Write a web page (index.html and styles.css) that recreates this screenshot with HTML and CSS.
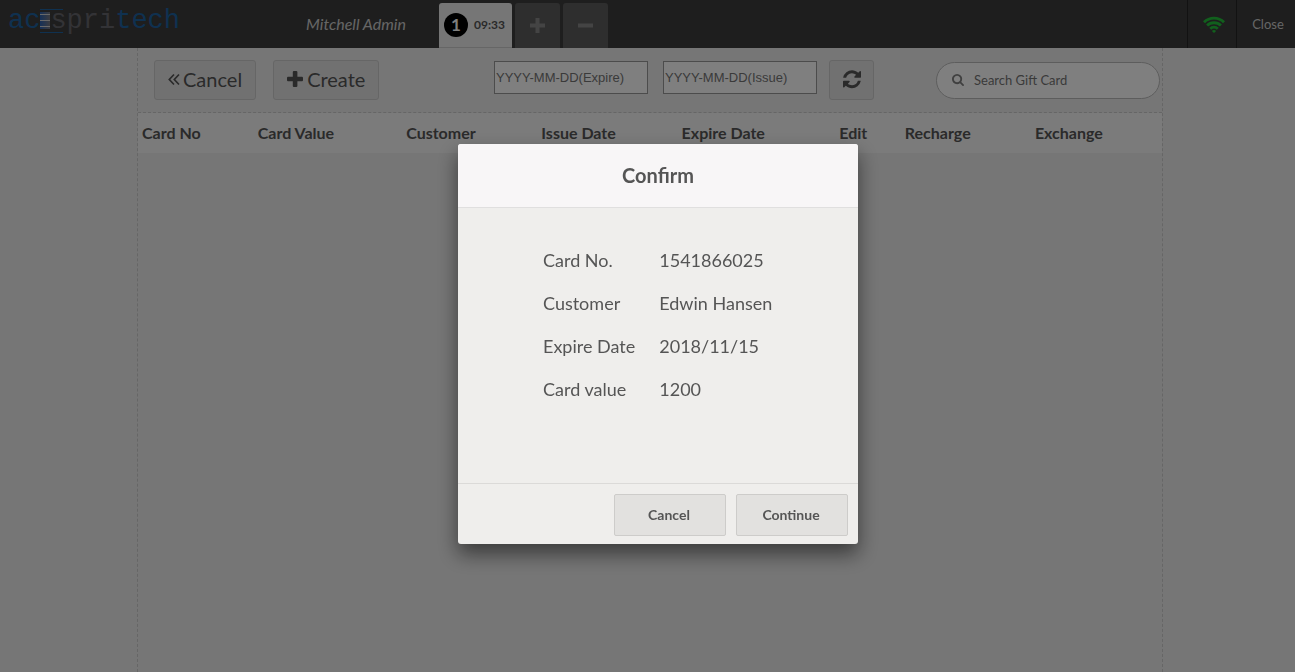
FILE: index.html
```html
<!DOCTYPE html>
<html lang="en">
<head>
<meta charset="utf-8">
<title>Gift Cards</title>
<link rel="stylesheet" href="styles.css">
</head>
<body>
<div class="pos">
  <header class="topbar">
    <div class="brand">
      <div class="logo">
        <span class="blue">ac</span>
        <svg class="logo-mark" viewBox="0 0 24 26" width="24" height="26" aria-hidden="true">
          <defs><linearGradient id="mark" x1="0" x2="1"><stop offset="0" stop-color="#2c62b0"/><stop offset="1" stop-color="#77777f"/></linearGradient></defs>
          <path d="M0 1.500H23M0 24.500H23" stroke="#1f62a0" fill="none"/>
          <rect y="4" width="10" height="17" fill="url(#mark)"/>
          <path d="M0 6.500H10M0 12.500H10M0 18.500H10" stroke="#d0d0d0"/>
        </svg>
        <span class="gray">spri</span><span class="blue">tech</span>
      </div>
      <span class="user">Mitchell Admin</span>
    </div>
    <nav class="orders">
      <button class="order active"><span class="num">1</span><span class="time">09:33</span></button>
      <button class="order" aria-label="New order"><svg width="15" height="15" viewBox="0 0 15 15"><path d="M7.500 2v11M2 7.500h11" stroke="#888" stroke-width="4" stroke-linecap="square" fill="none"/></svg></button>
      <button class="order" aria-label="Delete order"><svg width="15" height="15" viewBox="0 0 15 15"><path d="M2 7.500h11" stroke="#888" stroke-width="4" stroke-linecap="square" fill="none"/></svg></button>
    </nav>
    <div class="status">
      <div class="wifi"><svg width="22" height="17" viewBox="0 0 22 17" fill="none" stroke="#22c03a" stroke-width="3"><path d="M1 6.300A14.200 14.200 0 0 1 21 6.300M4.100 9.600A9.800 9.800 0 0 1 17.900 9.600M7.200 12.800A5.400 5.400 0 0 1 14.800 12.800" stroke-width="2.800"/><path d="M11 17L8.900 15A3 3 0 0 1 13.100 15Z" fill="#22c03a" stroke="none"/></svg></div>
      <button class="close">Close</button>
    </div>
  </header>
  <main class="screen">
    <div class="toolbar">
      <button class="btn"><svg width="12" height="14" viewBox="0 0 12 14" fill="none" stroke="currentColor" stroke-width="1.700"><path d="M6 2.500L1.300 7.500L6 12.500M11 2.500L6.300 7.500L11 12.500"/></svg>Cancel</button>
      <button class="btn create"><svg width="16" height="16" viewBox="0 0 16 16"><rect x="5.800" width="4.600" height="16" rx="1" fill="currentColor"/><rect y="5.700" width="16" height="4.600" rx="1" fill="currentColor"/></svg>Create</button>
      <div class="filters">
        <input class="date" type="text" aria-label="Expire date" placeholder="YYYY-MM-DD(Expire)">
        <input class="date" type="text" aria-label="Issue date" placeholder="YYYY-MM-DD(Issue)">
        <button class="btn refresh" aria-label="Refresh"><svg width="18" height="20" viewBox="0 0 1536 1664" fill="currentColor"><path d="M1511 928q0 5-1 7-64 268-268 434.500t-478 166.500q-146 0-282.500-55t-243.500-157l-129 129q-19 19-45 19t-45-19-19-45v-448q0-26 19-45t45-19h448q26 0 45 19t19 45-19 45l-137 137q71 66 161 102t187 36q134 0 250-65t186-179q11-17 53-117 8-23 30-23h192q13 0 22.500 9.500t9.500 22.500zm25-800v448q0 26-19 45t-45 19h-448q-26 0-45-19t-19-45 19-45l138-138q-148-137-349-137-134 0-250 65t-186 179q-11 17-53 117-8 23-30 23h-199q-13 0-22.500-9.500t-9.500-22.500v-7q65-268 270-434.500t480-166.500q146 0 284 55.500t245 156.500l130-129q19-19 45-19t45 19 19 45z"/></svg></button>
      </div>
      <label class="search">
        <svg width="12" height="12" viewBox="0 0 1664 1664" fill="currentColor" aria-hidden="true"><path d="M1152 704q0-185-131.500-316.500t-316.500-131.500-316.500 131.500-131.500 316.500 131.500 316.500 316.500 131.500 316.500-131.500 131.500-316.500zm512 832q0 52-38 90t-90 38q-54 0-90-38l-343-342q-179 124-399 124-143 0-273.500-55.500t-225-150-150-225-55.500-273.500 55.500-273.500 150-225 225-150 273.500-55.500 273.500 55.500 225 150 150 225 55.500 273.500q0 220-124 399l343 343q37 37 37 90z"/></svg>
        <input type="text" aria-label="Search Gift Card" placeholder="Search Gift Card">
      </label>
    </div>
    <table class="cards">
      <colgroup><col class="c-no"><col class="c-value"><col class="c-customer"><col class="c-issue"><col class="c-expire"><col class="c-edit"><col class="c-recharge"><col></colgroup>
      <thead><tr><th>Card No</th><th>Card Value</th><th>Customer</th><th>Issue Date</th><th>Expire Date</th><th>Edit</th><th>Recharge</th><th>Exchange</th></tr></thead>
    </table>
  </main>
</div>
<div class="overlay">
  <section class="dialog" role="dialog" aria-labelledby="dialog-title">
    <h1 class="title" id="dialog-title">Confirm</h1>
    <div class="body">
      <table class="details">
        <tr><td>Card No.</td><td>1541866025</td></tr>
        <tr><td>Customer</td><td>Edwin Hansen</td></tr>
        <tr><td>Expire Date</td><td>2018/11/15</td></tr>
        <tr><td>Card value</td><td>1200</td></tr>
      </table>
    </div>
    <footer class="actions"><button>Cancel</button><button>Continue</button></footer>
  </section>
</div>
</body>
</html>
```
FILE: styles.css
```css
* { box-sizing: border-box; }
body {
  margin: 0;
  font-family: Lato, "Liberation Sans", sans-serif;
  color: #555;
}
button, input { font-family: inherit; color: inherit; margin: 0; }
svg { display: block; flex: none; }

.pos {
  display: flex;
  flex-direction: column;
  min-height: 100vh;
  background: #ececec;
}

.topbar {
  display: flex;
  height: 48px;
  background: #3c3c3c;
}
.brand {
  flex: none;
  display: flex;
  justify-content: space-between;
  align-items: center;
  width: 439px;
  padding: 0 33px 0 8px;
}
.logo {
  display: flex;
  align-items: center;
  height: 40px;
  margin-bottom: 6px;
  font-family: "Liberation Mono", monospace;
  font-size: 27px;
  line-height: 40px;
}
.logo-mark { margin-right: -14px; }
.blue { color: #1f62a0; }
.gray { color: #66666c; }
.user { padding-bottom: 2px; font-size: 16px; font-style: italic; color: #ccc; }

.orders {
  display: flex;
  gap: 3px;
  padding-top: 3px;
}
.order {
  display: flex;
  align-items: center;
  justify-content: center;
  width: 45px;
  padding: 0;
  border: 0;
  border-radius: 3px 3px 0 0;
  background: #5c5c5c;
}
.order.active {
  gap: 6px;
  width: 73px;
  padding-right: 2px;
  background: #ececec;
  border-bottom: 1px solid #ccc;
}
.num {
  width: 24px;
  height: 24px;
  border-radius: 50%;
  background: #000;
  color: #fff;
  font-size: 17px;
  font-weight: 700;
  line-height: 24px;
}
.time { padding-bottom: 2px; font-size: 12px; font-weight: 700; }

.status { display: flex; margin-left: auto; }
.wifi {
  display: flex;
  align-items: center;
  width: 50px;
  padding-left: 15px;
  border: solid #242424;
  border-width: 0 1px;
}
.close {
  width: 58px;
  padding: 0 0 1px 4px;
  border: 0;
  background: none;
  color: #ccc;
  font-size: 13px;
}

.screen {
  flex: 1;
  margin: 0 132px 0 137px;
  border: dashed #ccc;
  border-width: 0 1px;
}
.toolbar {
  display: flex;
  align-items: center;
  height: 65px;
  padding: 0 2px 0 16px;
  border-bottom: 1px dashed #ccc;
}
.btn {
  display: flex;
  align-items: center;
  justify-content: center;
  gap: 3px;
  height: 40px;
  padding: 0 13px 2px;
  border: 1px solid #cdcdcd;
  border-radius: 3px;
  background: #e3e3e3;
  font-size: 20px;
}
.create { margin-left: 17px; gap: 4px; padding: 0 13px 2px; }
.filters { display: flex; margin: 0 62px 0 auto; }
.date {
  width: 154px;
  height: 33px;
  margin: 1px 15px 0 0;
  padding: 0 1px;
  border: 1px solid #999;
  background: #fff;
  font-family: "Liberation Sans", Arial, sans-serif;
  font-size: 13px;
}
.date::placeholder { color: #757575; }
.refresh { width: 45px; padding: 0; margin-left: -3px; }
.search {
  display: flex;
  align-items: center;
  gap: 10px;
  width: 224px;
  height: 37px;
  padding: 0 15px;
  border: 1px solid #bbb;
  border-radius: 20px;
  background: #fff;
  color: #808080;
}
.search input {
  min-width: 0;
  flex: 1;
  padding: 0;
  border: 0;
  background: none;
  font-size: 13px;
}
.search input::placeholder { color: #757575; }

.cards {
  width: 100%;
  border-collapse: collapse;
  table-layout: fixed;
  background: #f6f6f6;
}
.cards th {
  height: 40px;
  padding: 0 4px 2px;
  font-size: 16px;
  text-align: left;
}
.c-no { width: 11.3%; }
.c-value { width: 14.5%; }
.c-customer { width: 13.2%; }
.c-issue { width: 13.7%; }
.c-expire { width: 15.4%; }
.c-edit { width: 6.4%; }
.c-recharge { width: 12.7%; }

.overlay {
  position: fixed;
  inset: 0;
  display: flex;
  align-items: center;
  justify-content: center;
  padding: 16px 0 0 21px;
  background: rgba(0, 0, 0, 0.5);
}
.dialog {
  display: flex;
  flex-direction: column;
  width: 400px;
  min-height: 400px;
  border-radius: 3px;
  overflow: hidden;
  background: #efeeec;
  box-shadow: 0 10px 20px rgba(0, 0, 0, 0.5);
}
.title {
  margin: 0;
  border-bottom: 1px solid #e0dfdf;
  background: #f8f6f7;
  font-size: 20px;
  line-height: 63px;
  text-align: center;
}
.body { flex: 1; padding: 30px 0 0 83px; }
.details { border-collapse: collapse; }
.details td {
  height: 43px;
  padding: 0 22px 0 2px;
  font-size: 18px;
}
.actions {
  display: flex;
  justify-content: flex-end;
  gap: 10px;
  padding: 10px 10px 8px;
  border-top: 1px solid #dbdad8;
}
.actions button {
  width: 112px;
  height: 42px;
  padding: 0 2px 2px 0;
  border: 1px solid #cdccca;
  border-radius: 2px;
  background: #e2e1df;
  font-size: 14px;
  font-weight: 700;
}
```
